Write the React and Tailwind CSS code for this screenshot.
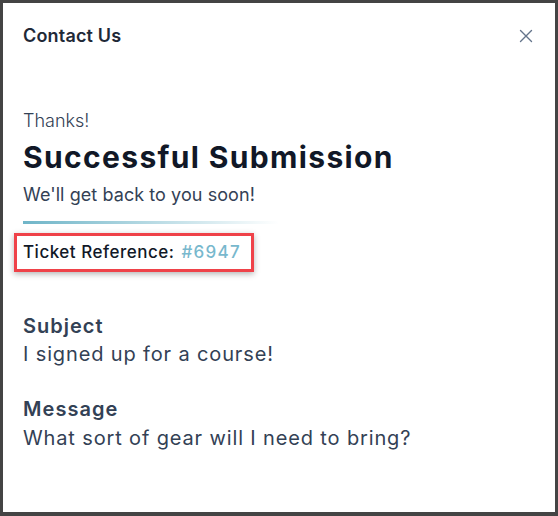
export default function App() {
  const font = { fontFamily: "Inter, 'Noto Sans', sans-serif" };
  return (
    <div className="w-[558px] h-[516px] bg-[#444444] pt-[3px] pl-[3px] pr-[3px] pb-[4px]" style={font}>
      <div className="w-full h-full bg-white flex flex-col">
        <div className="flex items-center justify-between pl-5 pr-[22px] h-[66px]">
          <h2 className="text-[18px] leading-[24px] font-semibold text-[#1f2937] tracking-[0.01em]">Contact Us</h2>
          <svg width="14" height="14" viewBox="0 0 14 14" fill="none" stroke="#64748b" strokeWidth="1.4" strokeLinecap="round">
            <path d="M1.5 1.5 L12.5 12.5 M12.5 1.5 L1.5 12.5" />
          </svg>
        </div>
        <div className="px-5 pt-[40px] flex flex-col">
          <p className="text-[18px] leading-[24px] font-light text-[#334155]">Thanks!</p>
          <h1 className="text-[30px] leading-[38px] font-bold text-[#111827] mt-[5px] tracking-[0.045em]">Successful Submission</h1>
          <p className="text-[18px] leading-[26px] text-[#334155] mt-[6px] tracking-[0.004em]">We'll get back to you soon!</p>
          <div className="mt-[13px] h-[3px] w-[256px] bg-gradient-to-r from-[#6fb5c8] to-transparent" />
          <div className="mt-[9px] -ml-[9px] self-start border-[3px] border-[#ef4249] shadow-[0_2px_6px_rgba(0,0,0,0.3)] pl-[6px] pr-[10px] h-[39px] flex items-center">
            <span className="text-[17px] font-medium text-[#111827] tracking-[0.03em]">Ticket Reference:</span>
            <span className="text-[17px] font-medium text-[#78b8cd] ml-[7px] tracking-[0.076em]">#6947</span>
          </div>
          <p className="mt-[40px] text-[20px] leading-[28px] font-semibold text-[#334155] tracking-[0.05em]">Subject</p>
          <p className="text-[20px] leading-[28px] text-[#334155] tracking-[0.043em]">I signed up for a course!</p>
          <p className="mt-[27px] text-[20px] leading-[28px] font-semibold text-[#334155] tracking-[0.053em]">Message</p>
          <p className="mt-[1px] text-[20px] leading-[28px] text-[#334155] tracking-[0.043em]">What sort of gear will I need to bring?</p>
        </div>
      </div>
    </div>
  );
}
